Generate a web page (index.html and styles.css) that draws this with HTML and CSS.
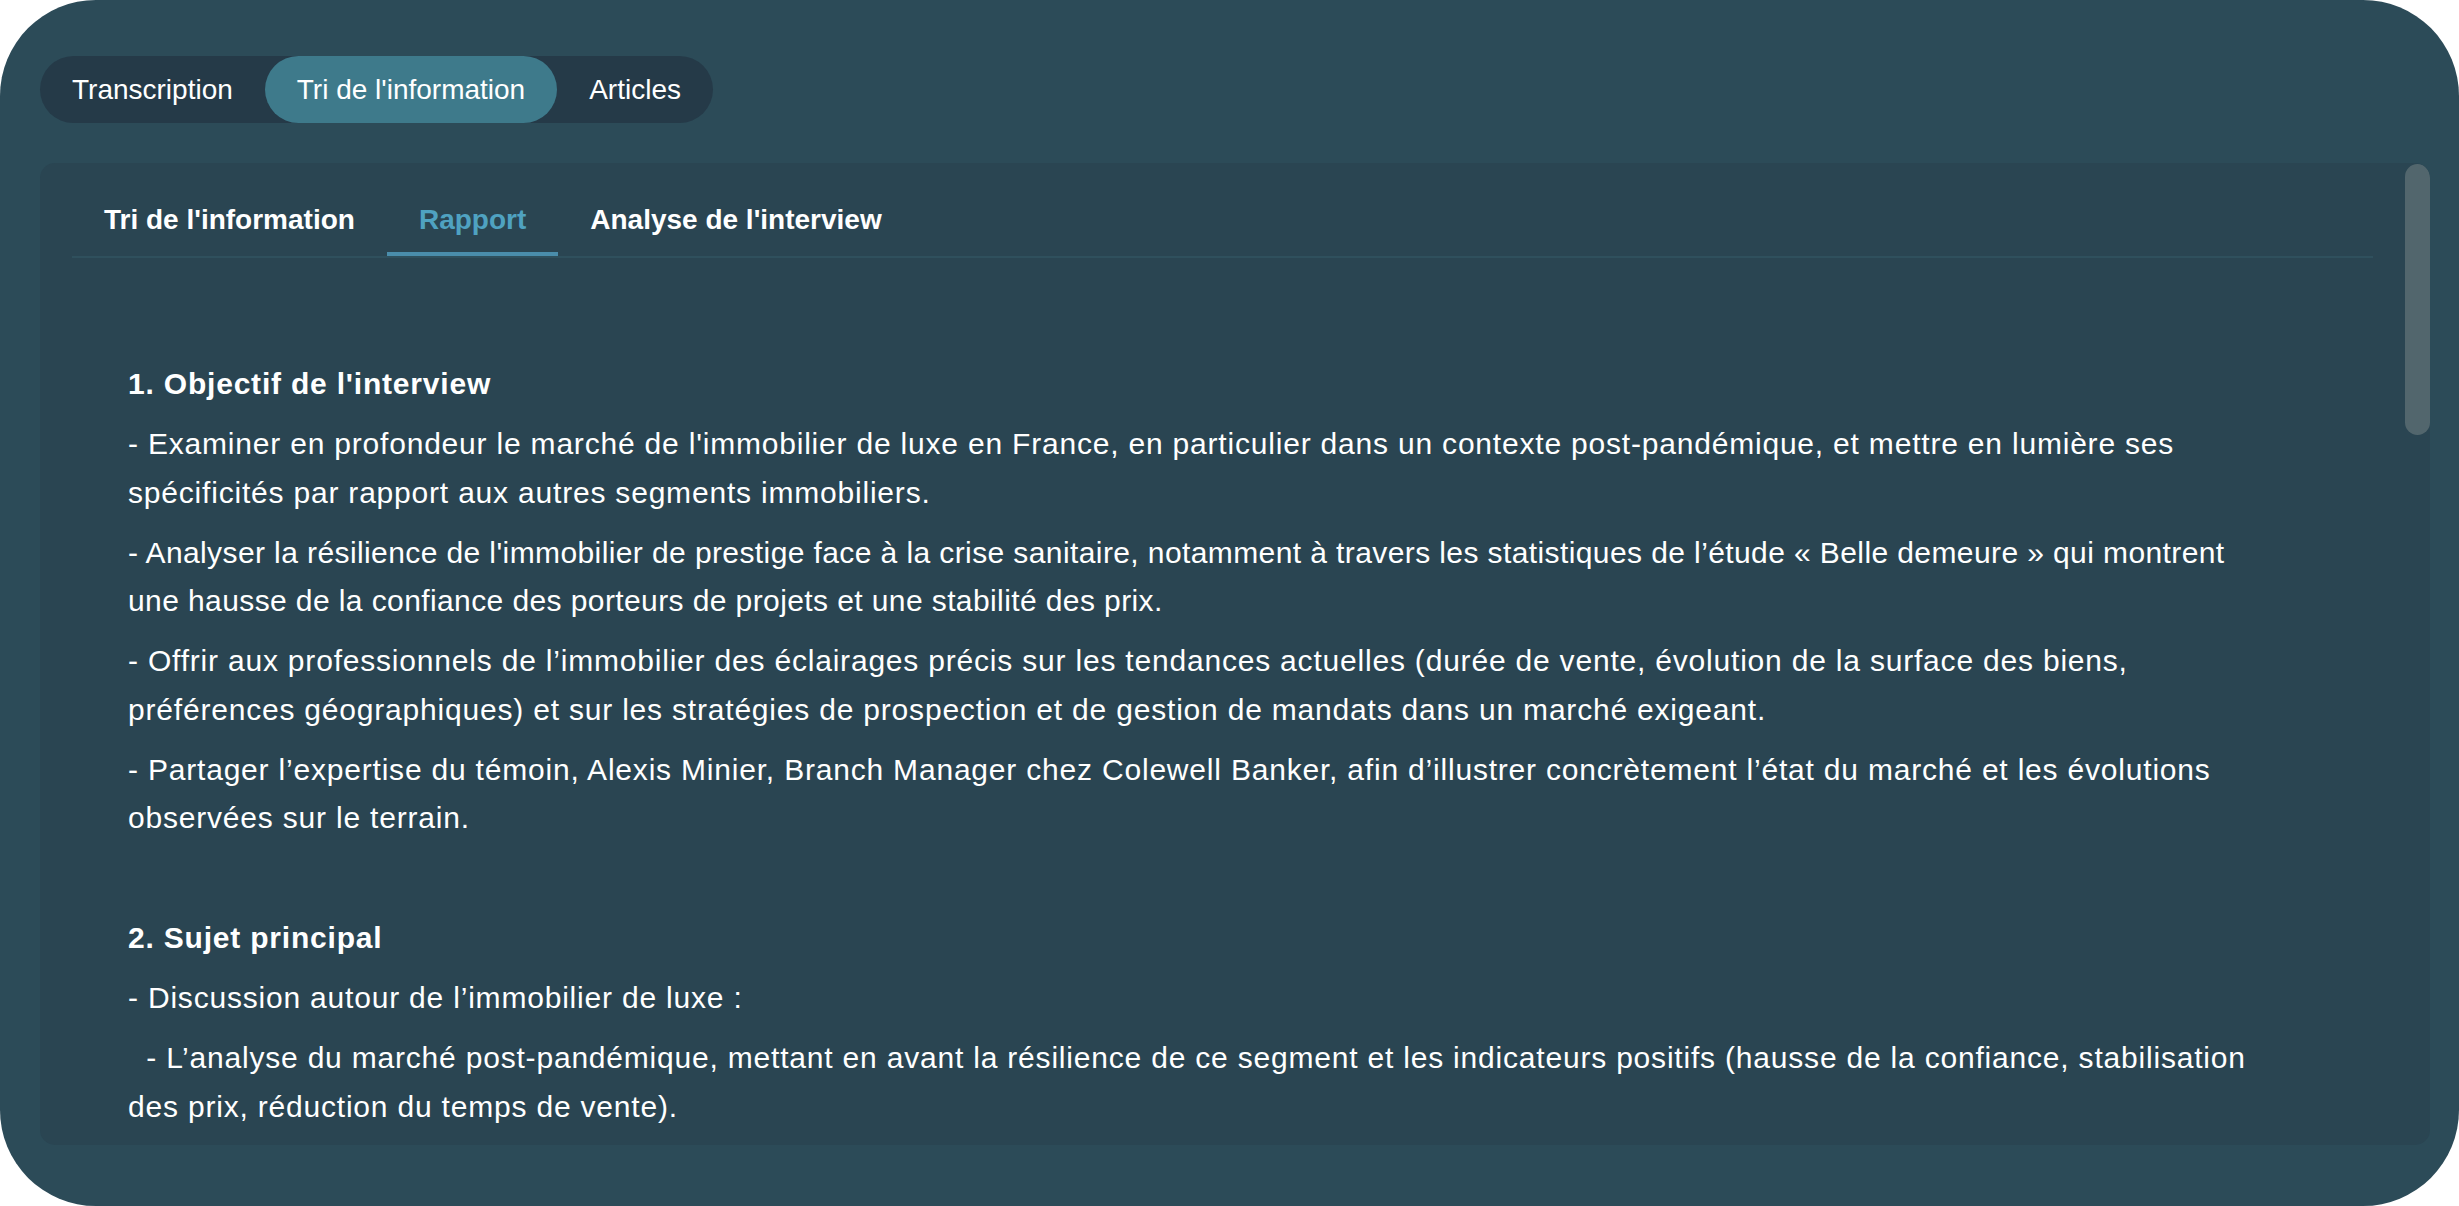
FILE: index.html
```html
<!DOCTYPE html>
<html lang="fr">
<head>
<meta charset="utf-8">
<title>Rapport</title>
<link rel="stylesheet" href="styles.css">
</head>
<body>
<div class="app">
  <nav class="main-tabs">
    <div class="main-tab">Transcription</div>
    <div class="main-tab active">Tri de l'information</div>
    <div class="main-tab">Articles</div>
  </nav>
  <section class="panel">
    <div class="panel-body">
      <div class="sub-tabs">
        <div class="sub-tab">Tri de l'information</div>
        <div class="sub-tab active">Rapport</div>
        <div class="sub-tab">Analyse de l'interview</div>
      </div>
      <article class="report">
        <h3 class="report-heading">1. Objectif de l'interview</h3>
        <p>- Examiner en profondeur le marché de l'immobilier de luxe en France, en particulier dans un contexte post-pandémique, et mettre en lumière ses spécificités par rapport aux autres segments immobiliers.</p>
        <p class="tight">- Analyser la résilience de l'immobilier de prestige face à la crise sanitaire, notamment à travers les statistiques de l’étude « Belle demeure » qui montrent une hausse de la confiance des porteurs de projets et une stabilité des prix.</p>
        <p>- Offrir aux professionnels de l’immobilier des éclairages précis sur les tendances actuelles (durée de vente, évolution de la surface des biens, préférences géographiques) et sur les stratégies de prospection et de gestion de mandats dans un marché exigeant.</p>
        <p>- Partager l’expertise du témoin, Alexis Minier, Branch Manager chez Colewell Banker, afin d’illustrer concrètement l’état du marché et les évolutions observées sur le terrain.</p>

        <h3 class="report-heading section">2. Sujet principal</h3>
        <p>- Discussion autour de l’immobilier de luxe :</p>
        <p class="nested">  - L’analyse du marché post-pandémique, mettant en avant la résilience de ce segment et les indicateurs positifs (hausse de la confiance, stabilisation des prix, réduction du temps de vente).</p>
      </article>
    </div>
    <div class="scrollbar" aria-hidden="true">
      <div class="scrollbar-thumb"></div>
    </div>
  </section>
</div>
</body>
</html>
```

FILE: styles.css
```css
html,
body {
  margin: 0;
  height: 100%;
  background: #ffffff;
}

body {
  font-family: "Liberation Sans", Arial, sans-serif;
  color: #ffffff;
}

.app {
  box-sizing: border-box;
  height: 100vh;
  background: #2c4b58;
  border-radius: 96px;
  padding: 56px 29px 61px 40px;
  display: flex;
  flex-direction: column;
  gap: 40px;
}

.main-tabs {
  display: flex;
  align-self: flex-start;
  height: 67px;
  background: #253a48;
  border-radius: 34px;
}

.main-tab {
  padding: 0 32px;
  line-height: 67px;
  font-size: 28px;
  color: #ffffff;
  border-radius: 34px;
  white-space: nowrap;
}

.main-tab.active {
  background: #3e7a8b;
}

.panel {
  flex: 1;
  min-height: 0;
  display: flex;
  overflow: hidden;
  background: #2a4552;
  border-radius: 15px;
}

.panel-body {
  flex: 1;
  min-width: 0;
  overflow: hidden;
  padding: 25px 32px 0;
}

.scrollbar {
  width: 25px;
  flex: none;
  padding-top: 1px;
}

.scrollbar-thumb {
  height: 271px;
  background: #52666d;
  border-radius: 13px;
}

.sub-tabs {
  display: flex;
  border-bottom: 2px solid #2f505d;
}

.sub-tab {
  padding: 0 32px;
  height: 64px;
  line-height: 64px;
  font-size: 28px;
  font-weight: 700;
  color: #ffffff;
  border-bottom: 4px solid transparent;
  white-space: nowrap;
}

.sub-tab.active {
  color: #4fa2c1;
  border-bottom-color: #4a8dab;
}

.report {
  padding: 102px 111px 0 56px;
}

.report-heading {
  margin: 0;
  font-size: 30px;
  font-weight: 700;
  line-height: 48.3px;
  letter-spacing: 0.8px;
}

.report-heading.section {
  margin-top: 71px;
}

.report p {
  margin: 12px 0 0;
  font-size: 30px;
  line-height: 48.3px;
  letter-spacing: 0.8px;
}

.report p.tight {
  letter-spacing: 0.4px;
}

.report p.nested {
  white-space: pre-wrap;
}
```
